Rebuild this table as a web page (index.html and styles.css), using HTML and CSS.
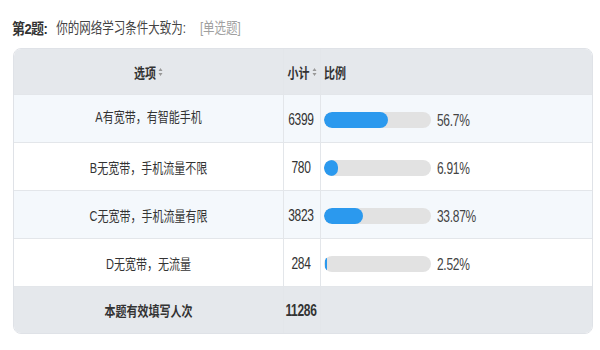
FILE: index.html
```html
<!DOCTYPE html>
<html lang="zh-CN">
<head>
<meta charset="utf-8">
<link rel="stylesheet" href="styles.css">
</head>
<body>
<div class="page">
  <div class="title">
    <span class="tx q-no">第2题:</span>
    <span class="tx q-text">你的网络学习条件大致为:</span>
    <span class="tx q-type">[单选题]</span>
  </div>
  <div class="table">
    <div class="cell head c1"><span class="tx">选项</span><svg class="sort" viewBox="0 0 5 10" width="5" height="10"><path d="M2.5 1 L4.5 4 L0.5 4 Z M2.5 9 L4.5 6 L0.5 6 Z" fill="#999"/></svg></div>
    <div class="cell head c2"><span class="tx">小计</span><svg class="sort" viewBox="0 0 5 10" width="5" height="10"><path d="M2.5 1 L4.5 4 L0.5 4 Z M2.5 9 L4.5 6 L0.5 6 Z" fill="#999"/></svg></div>
    <div class="cell head c3"><span class="tx">比例</span></div>

    <div class="cell alt c1"><span class="tx up">A有宽带，有智能手机</span></div>
    <div class="cell alt c2"><span class="tx num">6399</span></div>
    <div class="cell alt c3"><div class="bar"><div class="fill" style="width:60%"></div></div><span class="tx num pct">56.7%</span></div>

    <div class="cell c1"><span class="tx">B无宽带，手机流量不限</span></div>
    <div class="cell c2"><span class="tx num">780</span></div>
    <div class="cell c3"><div class="bar"><div class="fill" style="width:8.5%"></div></div><span class="tx num pct">6.91%</span></div>

    <div class="cell alt c1"><span class="tx">C无宽带，手机流量有限</span></div>
    <div class="cell alt c2"><span class="tx num">3823</span></div>
    <div class="cell alt c3"><div class="bar"><div class="fill" style="width:36%"></div></div><span class="tx num pct">33.87%</span></div>

    <div class="cell c1"><span class="tx">D无宽带，无流量</span></div>
    <div class="cell c2"><span class="tx num">284</span></div>
    <div class="cell c3"><div class="bar"><div class="fill thin" style="width:2px"></div></div><span class="tx num pct">2.52%</span></div>

    <div class="cell foot c1"><span class="tx">本题有效填写人次</span></div>
    <div class="cell foot c2"><span class="tx num">11286</span></div>
    <div class="cell foot c3 last"></div>
  </div>
</div>
</body>
</html>
```

FILE: styles.css
```css
html, body {
  margin: 0;
  padding: 0;
  background: #ffffff;
}

body {
  font-family: "Liberation Sans", "Noto Sans CJK SC", sans-serif;
  color: #333333;
  font-size: 11px;
}

.page {
  padding: 18px 7px 0 13px;
  width: 580px;
}

.tx {
  display: inline-block;
  transform: scaleY(1.25);
  white-space: nowrap;
}

.title {
  display: flex;
  align-items: center;
  height: 18px;
  margin-left: -1px;
  margin-bottom: 12px;
}

.q-no {
  font-weight: bold;
  font-size: 13px;
  color: #333;
  letter-spacing: -0.6px;
  transform: scaleY(1.15);
}

.q-text {
  margin-left: 9px;
  font-size: 11.5px;
  color: #444;
}

.q-type {
  margin-left: 14px;
  font-size: 11.5px;
  color: #a0a0a0;
}

.table {
  display: grid;
  grid-template-columns: 270px 37px 1fr;
  grid-template-rows: 46px 48px 48px 48px 48px 46px;
  border: 1px solid #dfe2e7;
  border-radius: 8px;
  overflow: hidden;
  box-sizing: border-box;
  width: 580px;
}

.cell {
  display: flex;
  align-items: center;
  background: #ffffff;
  border-bottom: 1px solid #e3e6ea;
  border-right: 1px solid #e3e6ea;
  box-sizing: border-box;
}

.cell.c3 {
  border-right: none;
}

.cell.alt {
  background: #f4f8fc;
}

.cell.head,
.cell.foot {
  background: #e5e8ec;
  font-weight: bold;
}

.cell.foot {
  border-bottom: none;
}

.c1 {
  justify-content: center;
}

.c2 {
  justify-content: center;
  padding-right: 2px;
}

.c3 {
  padding-left: 3px;
}

.head.c2 {
  padding-right: 0;
}

.up {
  margin-top: -6px;
}

.sort {
  margin-left: 2px;
  margin-top: 1px;
}

.num {
  font-size: 12px;
  transform: scaleY(1.4);
  letter-spacing: -0.3px;
}

.foot .num {
  font-weight: bold;
}

.bar {
  width: 107px;
  height: 16px;
  border-radius: 8px;
  background: #e2e2e2;
  overflow: hidden;
  margin-top: 3px;
}

.fill {
  height: 100%;
  background: #2b99ee;
  border-radius: 8px;
  min-width: 14px;
}

.fill.thin {
  min-width: 0;
  border-radius: 0;
  margin-left: 1px;
}

.pct {
  margin-left: 6px;
  margin-top: 3px;
  color: #444;
}
```
